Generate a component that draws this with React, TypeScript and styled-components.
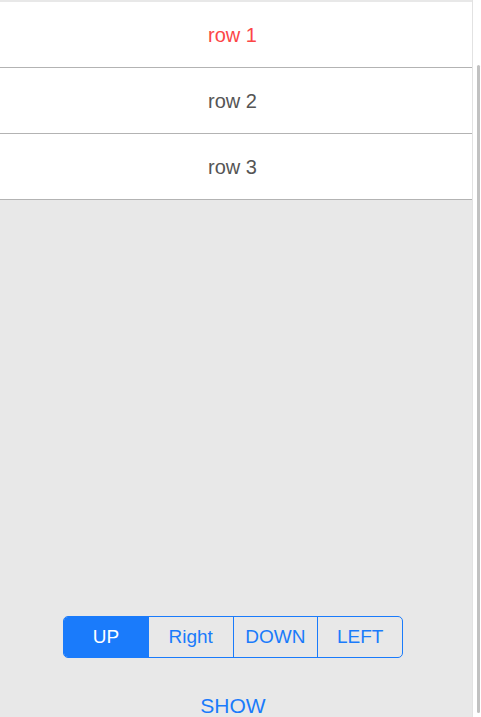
import React, { useState } from 'react'
import styled, { createGlobalStyle } from 'styled-components'

const GlobalStyle = createGlobalStyle`
  html, body {
    margin: 0;
    padding: 0;
    background: #ffffff;
    font-family: "Liberation Sans", Arial, sans-serif;
  }
`

const rows = ['row 1', 'row 2', 'row 3']
const directions = ['UP', 'Right', 'DOWN', 'LEFT']
const blue = '#1a7bfb'

const App = () => {
  const [selectedRow, setSelectedRow] = useState(0)
  const [direction, setDirection] = useState(0)

  return (
    <>
      <GlobalStyle />
      <StyledFrame>
        <StyledScreen>
          <StyledList>
            {rows.map((row, i) => (
              <StyledRow key={row} $active={i === selectedRow} onClick={() => setSelectedRow(i)}>
                {row}
              </StyledRow>
            ))}
          </StyledList>
          <StyledControls>
            <StyledSegmented>
              {directions.map((d, i) => (
                <StyledSegment
                  key={d}
                  $active={i === direction}
                  $first={i === 0}
                  onClick={() => setDirection(i)}
                >
                  {d}
                </StyledSegment>
              ))}
            </StyledSegmented>
            <StyledShowButton>SHOW</StyledShowButton>
          </StyledControls>
        </StyledScreen>
        <StyledScrollTrack>
          <StyledScrollThumb />
        </StyledScrollTrack>
      </StyledFrame>
    </>
  )
}
export default App

const StyledFrame = styled.div`
  display: flex;
  width: 481px;
  height: 717px;
  overflow: hidden;
`
const StyledScreen = styled.div`
  width: 473px;
  height: 717px;
  background-color: #e8e8e8;
  border-right: 1px solid #e2e2e2;
  padding-top: 2px;
  box-sizing: border-box;
  overflow: hidden;
`
const StyledList = styled.div`
  background-color: #ffffff;
`
const StyledRow = styled.div<{ $active: boolean }>`
  height: 65px;
  display: flex;
  align-items: center;
  justify-content: center;
  border-bottom: 1px solid #b3b3b3;
  font-size: 20px;
  padding-top: 2px;
  box-sizing: border-box;
  height: 66px;
  border-bottom-width: 1px;
  color: ${({ $active }) => ($active ? '#fc4646' : '#555555')};
  padding-right: 7px;
  cursor: pointer;
`
const StyledControls = styled.div`
  display: flex;
  flex-direction: column;
  align-items: center;
  margin-top: 416px;
  padding-right: 6px;
`
const StyledSegmented = styled.div`
  display: flex;
  width: 340px;
  height: 42px;
  border: 1px solid ${blue};
  border-radius: 5px;
  overflow: hidden;
  box-sizing: border-box;
`
const StyledSegment = styled.div<{ $active: boolean; $first: boolean }>`
  flex: 1;
  display: flex;
  align-items: center;
  justify-content: center;
  font-size: 19px;
  color: ${({ $active }) => ($active ? '#ffffff' : blue)};
  background-color: ${({ $active }) => ($active ? blue : 'transparent')};
  border-left: ${({ $first }) => ($first ? 'none' : `1px solid ${blue}`)};
  cursor: pointer;
`
const StyledShowButton = styled.div`
  margin-top: 36px;
  font-size: 21px;
  line-height: 24px;
  color: ${blue};
  cursor: pointer;
`
const StyledScrollTrack = styled.div`
  flex: 1;
  display: flex;
  justify-content: flex-end;
  padding: 65px 1px 4px 0;
  background: #ffffff;
`
const StyledScrollThumb = styled.div`
  width: 3px;
  height: 100%;
  background-color: #c1c1c1;
  border-radius: 2px;
`
